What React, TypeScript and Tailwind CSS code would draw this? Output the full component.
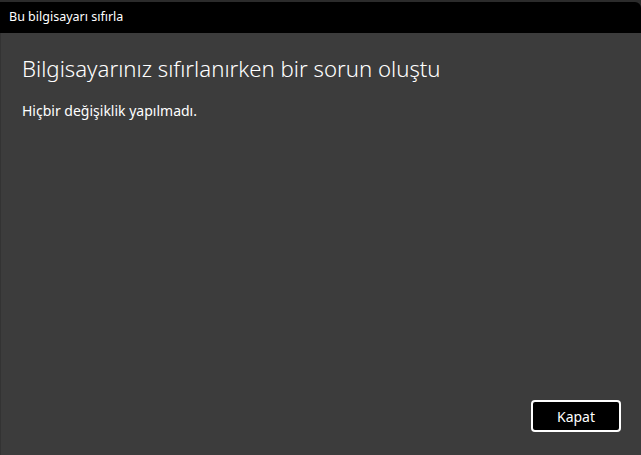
export default function App() {
  return (
    <div
      className="flex h-[455px] w-[641px] flex-col bg-[#2b2b2b] pt-[2px] text-white"
      style={{ fontFamily: '"Noto Sans", "Open Sans", sans-serif' }}
    >
      {/* başlık çubuğu */}
      <div className="flex h-[31px] items-center rounded-tr-[6px] bg-black px-[9px] text-[12.5px]">
        Bu bilgisayarı sıfırla
      </div>

      <div className="flex flex-1 flex-col border-l border-[#333] bg-[#3c3c3c] px-[21px] pb-[23px] pt-[21px]">
        <h1 className="text-[22.2px] leading-[30px] font-light">Bilgisayarınız sıfırlanırken bir sorun oluştu</h1>
        <p className="mt-[17px] text-[14px] leading-[20px]">Hiçbir değişiklik yapılmadı.</p>

        <div className="mt-auto flex justify-end">
          <button className="mr-[-1px] h-[32px] w-[90px] rounded-[4px] border-2 border-white bg-black text-[14px]">
            Kapat
          </button>
        </div>
      </div>
    </div>
  )
}
